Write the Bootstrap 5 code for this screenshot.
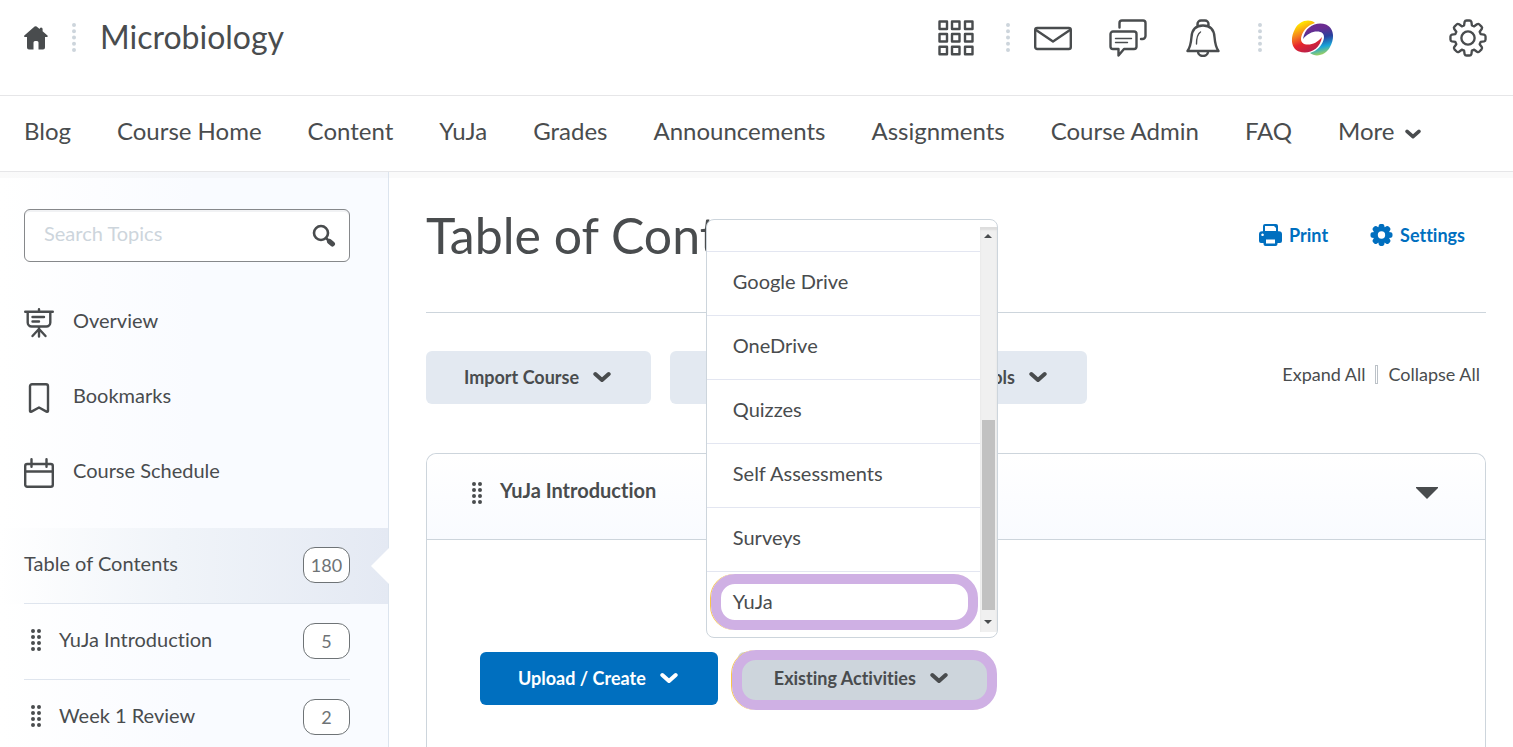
<!DOCTYPE html>
<html lang="en">
<head>
<meta charset="utf-8">
<meta name="viewport" content="width=device-width, initial-scale=1">
<title>Table of Contents - Microbiology</title>
<link href="https://cdn.jsdelivr.net/npm/bootstrap@5.3.0/dist/css/bootstrap.min.css" rel="stylesheet">
<style>
:root{--ink:#494c4e;--line:#cdd5dc;--pale:#e3e9f1;--brand:#006fbf;--ring:#cfb0e4}
body{font-family:Lato,"Liberation Sans",sans-serif;color:var(--ink);font-size:20px;line-height:24px;background:#fff}
body,button{font-variant-ligatures:none}
a{color:inherit;text-decoration:none}
svg{display:block;flex:none}
.line-icon{fill:none;stroke:currentColor;stroke-width:2.4;stroke-linejoin:round;stroke-linecap:round}
.thin{stroke-width:1.4}
.icon-btn{padding:0;border:0;background:none;color:inherit}
.topbar{height:96px;padding:0 26px 20px 24px;border-bottom:1px solid #e6e6e8}
.course-name{font-size:32px;line-height:40px;padding-bottom:2px}
.icon-group{gap:37px}
.rule-a{margin:0 24px 0 32px}
.rule-b{margin:0 29px 0 36px}
.admin-btn{margin-left:115px}
.course-nav{height:76px;padding:0 24px 6px;gap:46px;font-size:24px;line-height:32px;border-bottom:1px solid #e6e6e8;white-space:nowrap}
.course-nav .more{gap:10px}
.course-nav .more svg{margin-top:6px}
.workspace{box-shadow:inset 0 6px 0 rgba(0,0,0,.02);min-height:0}
.side{flex:0 0 389px;border-right:1px solid #dce4ee;background:linear-gradient(90deg,#fff,#f9fbff 50%);box-shadow:inset 0 6px 0 rgba(0,0,0,.02);padding-top:37px}
.search-box{margin:0 38px 23px 24px}
.search-box .form-control{height:53px;border:1px solid #86888b;border-radius:6px;font-size:20px;padding:0 56px 6px 19px;box-shadow:inset 0 2px 0 #f1f2f4;color:var(--ink)}
.search-box .form-control::placeholder{color:#cdd5dc;opacity:1}
.search-box button{position:absolute;right:14px;top:15px}
.side-link{height:75px;padding-left:24px;gap:19px}
.side-link span,.topic-name,.module-name{padding-bottom:5px}
.topic-row{height:76px;padding:0 38px 0 24px}
.topic-row>a{border-bottom:1px solid #dfe5ee;height:100%}
.topic-row svg{margin:0 17px 4px 6px}
.topic-row.current{background:linear-gradient(90deg,#fff,#f0f4f9 45%,#e4e9f3);position:relative;margin-top:18px}
.topic-row.current::after{content:"";position:absolute;right:-1px;top:20px;border:18px solid transparent;border-right-color:#fff;border-left:0}
.count{width:47px;height:36px;border:1px solid #6e7376;border-radius:12px;background:#fff;color:#6e7376;font-size:18px;line-height:34px;text-align:center;margin-bottom:2px}
.content{padding:27px 27px 0 37px}
.title-row{height:114px;border-bottom:1px solid var(--line)}
.title-row h1{font-size:50px;line-height:72px;font-weight:400}
.page-tools{padding:24px 21px 0 0;gap:42px}
.tool-link{color:var(--brand);font-weight:700;font-size:18px;gap:7px}
.action-row{gap:19px;margin-top:38px}
.soft-btn{height:53px;border:0;border-radius:6px;padding:0 40px 2px 38px;background:var(--pale);color:var(--ink);font-weight:700;font-size:18px;gap:14px}
.soft-btn.primary-fill{background:var(--brand);color:#fff}
.soft-btn.pressed{background:#cdd5dc;padding-left:36px}
.fold-links{gap:10px;font-size:18px;padding:0 6px 7px 0}
.split-rule{width:3px;height:19px;border:1px solid #bcc2c8}
.module{border:1px solid var(--line);border-radius:10px 10px 0 0;border-bottom:0;margin-top:49px}
.module-head{height:86px;padding:0 47px 8px 44px;border-bottom:1px solid var(--line);background:linear-gradient(#fff,#f9fbff);border-radius:10px 10px 0 0;font-weight:700}
.module-head>svg{margin-right:17px}
.module-body{padding:112px 53px 60px;gap:20px}
.ringed{position:relative}
.ringed::after{content:"";position:absolute;border:10px solid var(--ring);border-radius:24px;box-shadow:-1px 0 0 #f8c64a;pointer-events:none}
.soft-btn.ringed::after{inset:-2px -9px -5px -6px}
.pick-menu{position:absolute;left:-32px;bottom:calc(100% + 14px);width:292px;border:1px solid var(--line);border-radius:8px;background:#fff;padding:7px 0 5px;z-index:5}
.pick-list{margin:0;padding:24px 0 0;list-style:none}
.pick-list li{height:64px;border-top:1px solid #e3e6f1}
.pick-list li a{display:flex;height:100%;align-items:center;padding:0 0 6px 26px}
.pick-list li.ringed{height:61px}
.pick-list li.ringed a{padding-bottom:2px}
.pick-list .ringed::after{inset:2px 2px 2px 4px}
.bar{width:17px;background:#f0f0f0;box-shadow:inset 0 3px 2px #ddd;padding:7px 2px 8px}
.bar-thumb{background:#c1c1c1;width:13px;height:190px;margin:auto 0 10px}
</style>
</head>
<body>
<div class="vh-100 overflow-hidden d-flex flex-column">
<svg class="d-none" aria-hidden="true">
<symbol id="dots" viewBox="0 0 4 30"><path d="M2 2v.01M2 8.2v.01M2 14.5v.01M2 20.8v.01M2 27v.01" stroke="#cdd5dc" stroke-width="4" stroke-linecap="round"/></symbol>
<symbol id="grip" viewBox="0 0 12 24"><path d="M3 3v.01M3 9v.01M3 15v.01M3 21v.01M9 3v.01M9 9v.01M9 15v.01M9 21v.01" stroke="#494c4e" stroke-width="4" stroke-linecap="round"/></symbol>
<symbol id="chev" viewBox="0 0 18 12"><path d="m2.300 3 6.700 6 6.700-6" fill="none" stroke="currentColor" stroke-width="4" stroke-linecap="round" stroke-linejoin="round"/></symbol>
<path id="cog" d="M-4-13-3.500-16.500Q-3-18-1.500-18H1.500Q3-18 3.500-16.500L4-13 6.400-12 9.200-14.100Q10.600-15 11.700-13.900L13.900-11.700Q15-10.600 14.100-9.200L12-6.400 13-4 16.500-3.500Q18-3 18-1.500V1.500Q18 3 16.500 3.500L13 4 12 6.400 14.100 9.200Q15 10.600 13.900 11.700L11.700 13.900Q10.600 15 9.200 14.100L6.400 12 4 13 3.500 16.500Q3 18 1.500 18H-1.500Q-3 18-3.500 16.500L-4 13-6.400 12-9.200 14.100Q-10.600 15-11.700 13.900L-13.900 11.700Q-15 10.600-14.100 9.200L-12 6.400-13 4-16.500 3.500Q-18 3-18 1.500V-1.500Q-18-3-16.500-3.500L-13-4-12-6.400-14.100-9.200Q-15-10.600-13.900-11.700L-11.700-13.900Q-10.600-15-9.200-14.100L-6.400-12Z"/>
</svg>

<header class="topbar d-flex align-items-center flex-shrink-0">
  <a href="#" aria-label="Home"><svg width="24" height="24" viewBox="0 0 24 24" fill="#494c4e"><path d="M10.600.6a1.500 1.500 0 0 1 2 0L15.600 3a1.500 1.500 0 0 1 3 0v2.300l4.600 3.900c1 .9.600 1.800-.6 1.800H21v10.500a2 2 0 0 1-2 2h-4.500v-7a1.500 1.500 0 0 0-1.500-1.500h-2a1.500 1.500 0 0 0-1.500 1.500v7H5a2 2 0 0 1-2-2V11H1.200C0 11-.4 10.100.6 9.200z"/></svg></a>
  <svg class="ms-4 me-4" width="4" height="30"><use href="#dots"/></svg>
  <a href="#" class="course-name">Microbiology</a>
  <div class="d-flex align-items-center ms-auto">
    <button class="icon-btn" aria-label="Select a course"><svg class="line-icon" width="36" height="36" viewBox="0 0 36 36"><path d="M1.500 1.500h7.500V9H1.500zM14 1.500h7.500V9H14zM27 1.500h7.500V9H27zM1.500 14h7.500v7.500H1.500zM14 14h7.500v7.500H14zM27 14h7.500v7.500H27zM1.500 26.800h7.500v7.500H1.500zM14 26.800h7.500v7.500H14zM27 26.800h7.500v7.500H27z"/></svg></button>
    <svg class="rule-a" width="4" height="30"><use href="#dots"/></svg>
    <div class="icon-group d-flex">
    <button class="icon-btn" aria-label="Messages"><svg class="line-icon" width="38" height="38" viewBox="0 0 38 38"><rect x="1.200" y="9" width="35.600" height="21" rx="2"/><path d="m2 11 17 11.500L36 11"/></svg></button>
    <button class="icon-btn" aria-label="Discussions"><svg class="line-icon" width="38" height="38" viewBox="0 0 38 38"><path d="M10.500 8.500V4a2.500 2.500 0 0 1 2.500-2.500h21A2.500 2.500 0 0 1 36.500 4v13a3 3 0 0 1-3 3H32"/><path d="M4 12.500h21a2.500 2.500 0 0 1 2.500 2.500v12.500A2.500 2.500 0 0 1 25 30H15l-5.500 6.500V30H4a2.500 2.500 0 0 1-2.500-2.500V15A2.500 2.500 0 0 1 4 12.500z"/><path class="thin" d="M6.500 19.500h16M6.500 23.500h12"/></svg></button>
    <button class="icon-btn" aria-label="Notifications"><svg class="line-icon" width="38" height="38" viewBox="0 0 38 38"><path d="M13.500 6.500V5A3.500 3.500 0 0 1 17 1.500h4A3.500 3.500 0 0 1 24.500 5v1.500M3.500 32c3-4 3.500-8 4-14C8 10.500 12 6.500 19 6.500s11 4 11.500 11.500c.5 6 1 10 4 14z"/><path d="M14 32.500a5 4.500 0 0 0 10 0"/><path class="thin" d="M16.500 13c-3 2-4 6-4 12"/></svg></button>
    </div>
    <svg class="rule-b" width="4" height="30"><use href="#dots"/></svg>
    <a href="#" aria-label="YuJa"><svg width="43" height="38" viewBox="0 0 43 38">
      <defs><linearGradient id="warm" gradientUnits="userSpaceOnUse" x1="9" y1="2" x2="22" y2="33"><stop offset=".08" stop-color="#ffe100"/><stop offset=".4" stop-color="#f47b20"/><stop offset=".65" stop-color="#e6242c"/><stop offset="1" stop-color="#b3204f"/></linearGradient>
      <linearGradient id="cool" gradientUnits="userSpaceOnUse" x1="14" y1="0" x2="22" y2="33"><stop offset=".02" stop-color="#b5d84a"/><stop offset=".28" stop-color="#19a5d9"/><stop offset=".55" stop-color="#2a3f9c"/><stop offset=".82" stop-color="#6b2c91"/></linearGradient></defs>
      <path fill="url(#warm)" d="M24 4C18-1 8 2 4 10-1 19 0 29 8 32.500 17 36 29 31 31 18 27 23 22 25.500 17 25.500 11 25.500 9 22 10.500 17 12.500 11 17 6 24 4z"/>
      <path fill="url(#cool)" transform="rotate(180 21.500 19)" d="M24 4C18-1 8 2 4 10-1 19 0 29 8 32.500 17 36 29 31 31 18 27 23 22 25.500 17 25.500 11 25.500 9 22 10.500 17 12.500 11 17 6 24 4z"/></svg></a>
    <button class="icon-btn admin-btn" aria-label="Admin tools"><svg class="line-icon" width="38" height="38" viewBox="-19.500 -19.500 39 39"><use href="#cog"/><circle r="6.800"/></svg></button>
  </div>
</header>

<nav class="course-nav d-flex align-items-center flex-shrink-0" aria-label="Course">
  <a href="#">Blog</a><a href="#">Course Home</a><a href="#">Content</a><a href="#">YuJa</a><a href="#">Grades</a><a href="#">Announcements</a><a href="#">Assignments</a><a href="#">Course Admin</a><a href="#">FAQ</a>
  <a href="#" class="more d-flex align-items-center">More <svg width="16" height="12"><use href="#chev"/></svg></a>
</nav>

<div class="workspace d-flex flex-grow-1">
  <aside class="side">
    <form class="search-box position-relative"><input class="form-control" type="text" placeholder="Search Topics" aria-label="Search Topics">
      <button class="icon-btn" type="button" aria-label="Search"><svg width="24" height="24" viewBox="0 0 24 24" fill="none" stroke="#494c4e" stroke-linecap="round"><circle cx="9" cy="9" r="7" stroke-width="2.600"/><path d="m14 14 2 2" stroke-width="2.500"/><path d="m17.500 17.500 3 2.500" stroke-width="5"/></svg></button></form>
    <a href="#" class="side-link d-flex align-items-center"><svg class="line-icon" width="30" height="30" viewBox="0 0 30 30"><path d="M1.200 3.700h27.600M15 1.200v2M3.700 4v10.500a4 4 0 0 0 4 4h14.600a4 4 0 0 0 4-4V4M8.500 9H20M8.500 13.500H15M15 19v9.500M14.500 21.500l-6 6.500M15.500 21.500l6 6.500"/></svg><span>Overview</span></a>
    <a href="#" class="side-link d-flex align-items-center"><svg class="line-icon" width="30" height="30" viewBox="0 0 30 30"><path d="M6 28V3.200a2 2 0 0 1 2-2h14a2 2 0 0 1 2 2V28q0 1.200-1.500.6L15 24.500l-7.500 4.100Q6 29.200 6 28z"/></svg><span>Bookmarks</span></a>
    <a href="#" class="side-link d-flex align-items-center"><svg class="line-icon" width="30" height="30" viewBox="0 0 30 30"><rect x="1.200" y="6" width="27.600" height="22.800" rx="2"/><path d="M1.200 13.500h27.600M7.500 1.200v7.500M22.500 1.200v7.500"/></svg><span>Course Schedule</span></a>
    <div class="topic-row current"><a href="#" class="d-flex align-items-center justify-content-between"><span class="topic-name">Table of Contents</span><span class="count">180</span></a></div>
    <div class="topic-row"><a href="#" class="d-flex align-items-center"><svg width="12" height="24"><use href="#grip"/></svg><span class="topic-name">YuJa Introduction</span><span class="count ms-auto">5</span></a></div>
    <div class="topic-row"><a href="#" class="d-flex align-items-center"><svg width="12" height="24"><use href="#grip"/></svg><span class="topic-name">Week 1 Review</span><span class="count ms-auto">2</span></a></div>
  </aside>

  <main class="content flex-grow-1">
    <div class="title-row d-flex justify-content-between">
      <h1 class="m-0">Table of Contents</h1>
      <div class="page-tools d-flex align-items-start">
        <a href="#" class="tool-link d-flex align-items-center"><svg width="23" height="22" viewBox="0 0 23 22"><path fill="#006fbf" fill-rule="evenodd" d="M6 0h11q2 0 2 2v5.200h1q3 0 3 3V17q0 2-2 2h-2.500v1q0 2-2 2h-10q-2 0-2-2v-1H2q-2 0-2-2v-6.800q0-3 3-3h1V2q0-2 2-2zM6 2v5h11V4l-2-2zM7 15.500v4h9v-4zM3.500 9.500a1.300 1.300 0 1 0 .1 0z"/></svg>Print</a>
        <a href="#" class="tool-link d-flex align-items-center"><svg width="23" height="22" viewBox="-19.500 -19.500 39 39"><g fill="#006fbf" stroke="#006fbf" stroke-width="3" stroke-linejoin="round"><use href="#cog"/></g><circle r="6.500" fill="#fff"/></svg>Settings</a>
      </div>
    </div>
    <div class="action-row d-flex align-items-center">
      <button class="soft-btn d-flex align-items-center">Import Course <svg width="18" height="12"><use href="#chev"/></svg></button>
      <button class="soft-btn d-flex align-items-center">Bulk Edit <svg width="18" height="12"><use href="#chev"/></svg></button>
      <button class="soft-btn d-flex align-items-center">Related Tools <svg width="18" height="12"><use href="#chev"/></svg></button>
      <div class="fold-links d-flex align-items-center ms-auto"><a href="#">Expand All</a><span class="split-rule"></span><a href="#">Collapse All</a></div>
    </div>
    <section class="module">
      <div class="module-head d-flex align-items-center"><svg width="12" height="24"><use href="#grip"/></svg><span class="module-name">YuJa Introduction</span>
        <button class="icon-btn ms-auto" aria-label="Collapse"><svg width="22" height="12" viewBox="0 0 22 12"><path d="M0 0h22v1L11 12 0 1z" fill="#494c4e"/></svg></button></div>
      <div class="module-body d-flex">
        <button class="soft-btn primary-fill d-flex align-items-center">Upload / Create <svg width="18" height="12"><use href="#chev"/></svg></button>
        <div class="position-relative">
          <button class="soft-btn pressed ringed d-flex align-items-center" aria-expanded="true">Existing Activities <svg width="18" height="12"><use href="#chev"/></svg></button>
          <div class="pick-menu d-flex">
            <ul class="pick-list flex-grow-1"><li><a href="#">Google Drive</a></li><li><a href="#">OneDrive</a></li><li><a href="#">Quizzes</a></li><li><a href="#">Self Assessments</a></li><li><a href="#">Surveys</a></li><li class="ringed"><a href="#">YuJa</a></li></ul>
            <div class="bar d-flex flex-column align-items-center" aria-hidden="true">
              <svg width="8" height="4" viewBox="0 0 8 4"><path d="M4 0l4 4H0z" fill="#494c4e"/></svg>
              <div class="bar-thumb"></div>
              <svg width="8" height="4" viewBox="0 0 8 4"><path d="M0 0h8L4 4z" fill="#494c4e"/></svg>
            </div>
          </div>
        </div>
      </div>
    </section>
  </main>
</div>
</div>
<script src="https://cdn.jsdelivr.net/npm/bootstrap@5.3.0/dist/js/bootstrap.bundle.min.js"></script>
</body>
</html>
